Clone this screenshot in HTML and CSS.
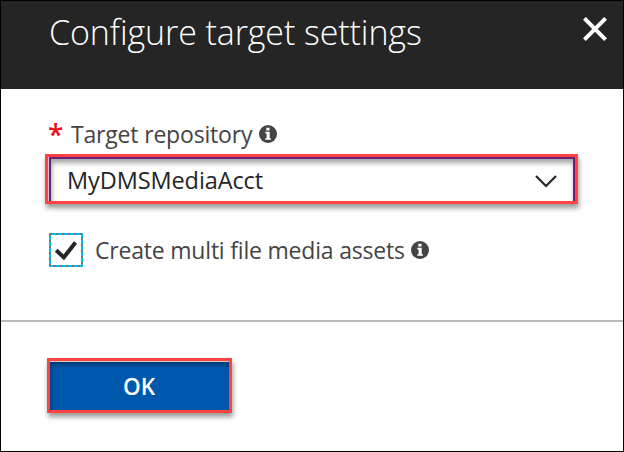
FILE: index.html
```
<!DOCTYPE html>
<html lang="en">
<head>
<meta charset="utf-8">
<title>Configure target settings</title>
<link rel="stylesheet" href="styles.css">
</head>
<body>
<main class="blade">
  <header class="blade-header">
    <h1 class="title">Configure target settings</h1>
    <svg class="close" viewBox="0 0 24 24"><path d="M1.4 1.4 22.6 22.6M22.6 1.4 1.4 22.6"/></svg>
  </header>
  <section class="form">
    <div class="label-row">
      <span class="required">*</span>
      <span class="label label-repository">Target repository</span>
      <svg class="info" viewBox="0 0 18 18"><circle cx="9" cy="9" r="9"/><path d="M7.3 2.7h3.2v2.8H7.3zM6.3 6.8h4.4v6.4h1.2v1.6H6.3v-1.6h1.3V8.4H6.3z"/></svg>
    </div>
    <div class="select">
      <div class="select-inner">
        <span class="select-value">MyDMSMediaAcct</span>
        <svg class="chevron" viewBox="0 0 22 13"><path d="M1 1 11 11 21 1"/></svg>
      </div>
    </div>
    <div class="check-row">
      <svg class="checkbox" viewBox="0 0 34 34"><rect class="box" x="1" y="1" width="32" height="32"/><rect class="dots" x="1" y="1" width="32" height="32"/><path d="M7.2 17.2 14.8 24.4 26.5 9.5"/></svg>
      <span class="label label-assets">Create multi file media assets</span>
      <svg class="info" viewBox="0 0 18 18"><circle cx="9" cy="9" r="9"/><path d="M7.3 2.7h3.2v2.8H7.3zM6.3 6.8h4.4v6.4h1.2v1.6H6.3v-1.6h1.3V8.4H6.3z"/></svg>
    </div>
  </section>
  <footer class="footer">
    <button class="ok"><span>OK</span></button>
  </footer>
</main>
</body>
</html>
```
FILE: styles.css
```
* { box-sizing: border-box; }
body { margin: 0; font-family: "Open Sans", "Noto Sans", sans-serif; }
.blade {
  width: 624px; height: 452px; border: 1px solid #000; background: #fff;
  display: flex; flex-direction: column; overflow: hidden;
}
.blade-header {
  height: 88px; flex: none; background: #252525; color: #fff;
  display: flex; justify-content: space-between; align-items: flex-start;
  padding: 7px 16px 0 48px;
}
.title { margin: 0; font-size: 34px; line-height: 48px; font-weight: 300; letter-spacing: -0.1px; white-space: nowrap; }
.close { width: 24px; height: 24px; margin-top: 9px; fill: none; stroke: #fff; stroke-width: 4; }
.form { height: 231px; flex: none; padding: 28px 45px 0 44px; }
.label-row { display: flex; align-items: center; height: 34px; padding-left: 3px; }
.required { width: 23px; flex: none; color: #e81123; font-size: 28px; font-weight: 600; line-height: 34px; }
.label { color: #444; font-size: 23px; line-height: 34px; white-space: nowrap; flex: none; }
.label-repository { width: 188px; letter-spacing: -0.18px; }
.label-assets { width: 316px; letter-spacing: -0.2px; }
.info { width: 18px; height: 18px; flex: none; fill: #444; }
.info path { fill: #fff; }
.select {
  width: 533px; height: 50px; margin-top: 3px; border: 3px solid #ff4343;
  padding-left: 1px; background: #ccc; box-shadow: 1px 4px 5px rgba(0,0,0,.4);
}
.select-inner {
  height: 44px; background: #fff; border: 2px solid #68217a; border-bottom: 0;
  box-shadow: inset 1px 4px 5px rgba(0,0,0,.35);
  display: flex; align-items: center; justify-content: space-between; padding: 2px 16px 0 16px;
}
.select-value { color: #252525; font-size: 23.5px; line-height: 34px; padding-bottom: 2px; letter-spacing: -0.1px; }
.chevron { width: 22px; height: 13px; fill: none; stroke: #252525; stroke-width: 2.2; }
.check-row { display: flex; align-items: center; height: 34px; margin-top: 29px; padding-left: 4px; }
.checkbox { width: 34px; height: 34px; flex: none; margin-right: 12px; fill: none; }
.checkbox .box { stroke: #00bcf2; stroke-width: 2; }
.checkbox .dots { stroke: #777; stroke-width: 2; stroke-dasharray: 2 4; }
.checkbox path { stroke: #252525; stroke-width: 4; }
.footer { flex: 1; border-top: 2px solid #bababa; padding: 36px 0 0 46px; }
.ok {
  display: flex; align-items: center; justify-content: center; width: 185px; height: 55px;
  padding: 3px 1px 0 0; border: 3px solid #ff4343; border-radius: 0; color: #fff;
  background: #0058ad; font: 600 22.5px/32px "Open Sans", sans-serif;
  box-shadow: inset 0 1px #ccc, inset 1px 4px 5px rgba(0,0,0,.35), 1px 4px 5px rgba(0,0,0,.4);
}
```
